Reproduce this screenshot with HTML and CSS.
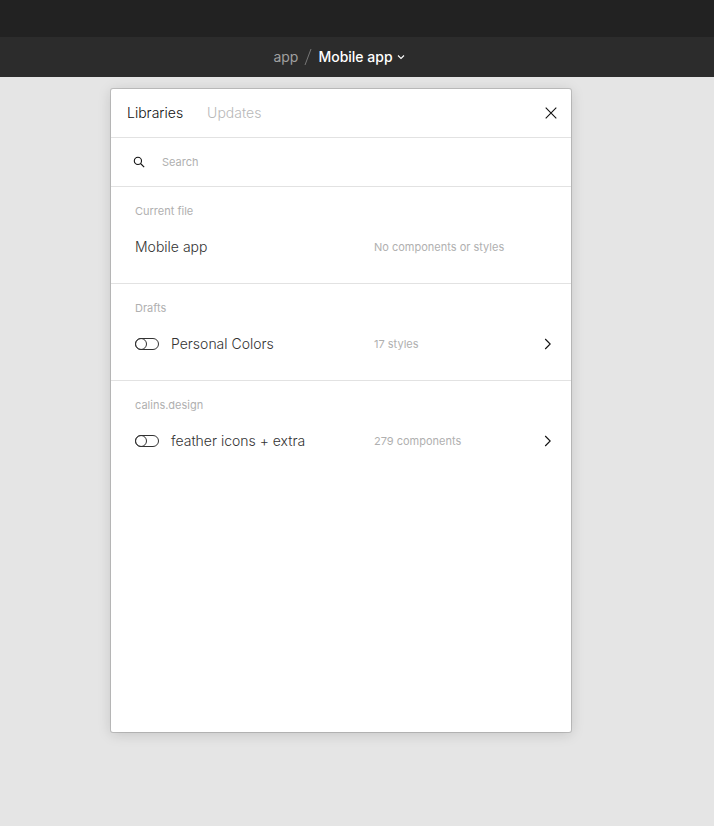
FILE: index.html
```html
<!DOCTYPE html>
<html lang="en">
<head>
  <meta charset="utf-8">
  <meta name="viewport" content="width=device-width, initial-scale=1">
  <title>Libraries</title>
  <link rel="stylesheet" href="styles.css">
</head>
<body>
  <div class="titlebar"></div>
  <header class="toolbar">
    <nav class="breadcrumb" aria-label="File">
      <a class="crumb" href="#">app</a>
      <svg class="slash" width="8" height="18" viewBox="0 0 8 18" aria-hidden="true"><path d="M1 17 7 1"/></svg>
      <button class="file" type="button">Mobile app
        <svg class="caret" width="8" height="6" viewBox="0 0 8 6" aria-hidden="true"><path d="M1 1.5 4 4.5 7 1.5"/></svg>
      </button>
    </nav>
  </header>
  <main class="canvas">
    <div class="panel" role="dialog" aria-label="Libraries">
      <div class="tabs">
        <button class="tab active" type="button">Libraries</button>
        <button class="tab" type="button">Updates</button>
        <button class="icon-button" type="button" aria-label="Close">
          <svg width="12" height="12" viewBox="0 0 12 12" aria-hidden="true"><path d="M.7.7 11.3 11.3M11.3.7.7 11.3"/></svg>
        </button>
      </div>
      <label class="search">
        <svg width="12" height="12" viewBox="0 0 12 12" aria-hidden="true"><circle cx="4.9" cy="4.9" r="3.6"/><path d="M7.5 7.5 11.2 11.2"/></svg>
        <input class="search-input" type="text" placeholder="Search" aria-label="Search">
      </label>
      <section class="group">
        <h2 class="group-title">Current file</h2>
        <div class="row">
          <span class="name">Mobile app</span>
          <span class="detail">No components or styles</span>
        </div>
      </section>
      <section class="group">
        <h2 class="group-title">Drafts</h2>
        <div class="row">
          <label class="name"><input class="toggle" type="checkbox">Personal Colors</label>
          <span class="detail">17 styles</span>
          <button class="icon-button" type="button" aria-label="Open Personal Colors">
            <svg width="8" height="12" viewBox="0 0 8 12" aria-hidden="true"><path d="M1.2 1 6.2 6 1.2 11"/></svg>
          </button>
        </div>
      </section>
      <section class="group">
        <h2 class="group-title">calins.design</h2>
        <div class="row">
          <label class="name"><input class="toggle" type="checkbox">feather icons + extra</label>
          <span class="detail">279 components</span>
          <button class="icon-button" type="button" aria-label="Open feather icons + extra">
            <svg width="8" height="12" viewBox="0 0 8 12" aria-hidden="true"><path d="M1.2 1 6.2 6 1.2 11"/></svg>
          </button>
        </div>
      </section>
    </div>
  </main>
</body>
</html>
```
FILE: styles.css
```css
*,
*::before {
  box-sizing: border-box;
}

body {
  margin: 0;
  min-height: 100vh;
  display: flex;
  flex-direction: column;
  background: #e5e5e5;
  color: #333;
  font: 14px/24px Inter, "Liberation Sans", sans-serif;
}

button,
input {
  margin: 0;
  padding: 0;
  border: 0;
  background: none;
  color: inherit;
  font: inherit;
}

svg {
  display: block;
  flex: none;
  fill: none;
  stroke: #111;
  stroke-width: 1.1;
}

.titlebar {
  height: 37px;
  background: #222;
}

.toolbar {
  display: flex;
  justify-content: center;
  height: 40px;
  padding-right: 36px;
  background: #2c2c2c;
}

.breadcrumb {
  display: flex;
  align-items: center;
  gap: 6px;
}

.crumb {
  color: #a0a0a0;
  text-decoration: none;
}

.slash {
  stroke: #777;
  stroke-width: 1;
}

.file {
  display: flex;
  align-items: center;
  gap: 4px;
  color: #fff;
  font-weight: 500;
}

.caret {
  stroke: #fff;
}

.canvas {
  flex: 1;
  display: flex;
  justify-content: center;
  padding: 12px 32px 94px 0;
}

.panel {
  width: 100%;
  max-width: 460px;
  background: #fff;
  border-radius: 2px;
  box-shadow: 0 0 0 1px rgba(0, 0, 0, 0.15), 0 2px 14px rgba(0, 0, 0, 0.15);
}

.tabs,
.search {
  display: flex;
  align-items: center;
  height: 49px;
  border-bottom: 1px solid #e2e2e2;
}

.tabs {
  gap: 24px;
  padding: 0 14px 0 16px;
}

.tab {
  color: #b8b8b8;
  font-weight: 300;
}

.tab.active {
  color: #111;
}

.icon-button {
  margin-left: auto;
}

.search {
  gap: 17px;
  padding: 0 24px 0 22px;
}

.search-input {
  flex: 1;
  min-width: 0;
  font-size: 11px;
  outline: none;
}

.search-input::placeholder {
  color: #b0b0b0;
  opacity: 1;
}

.group {
  padding: 12px 19px 24px 24px;
}

.group + .group {
  border-top: 1px solid #e2e2e2;
}

.group-title {
  margin: 0 0 12px;
  color: #b0b0b0;
  font-size: 11px;
  font-weight: 400;
}

.row {
  display: grid;
  grid-template-columns: 239fr 154fr 24px;
  align-items: center;
}

.name {
  display: flex;
  align-items: center;
  gap: 12px;
  font-weight: 300;
}

.detail {
  color: #b0b0b0;
  font-size: 11px;
}

.toggle {
  appearance: none;
  flex: none;
  width: 24px;
  height: 12px;
  border: 1px solid #333;
  border-radius: 6px;
}

.toggle::before {
  content: "";
  display: block;
  width: 12px;
  height: 12px;
  margin: -1px;
  border: 1px solid #333;
  border-radius: 50%;
}

.toggle:checked::before {
  margin-left: 11px;
}
```
